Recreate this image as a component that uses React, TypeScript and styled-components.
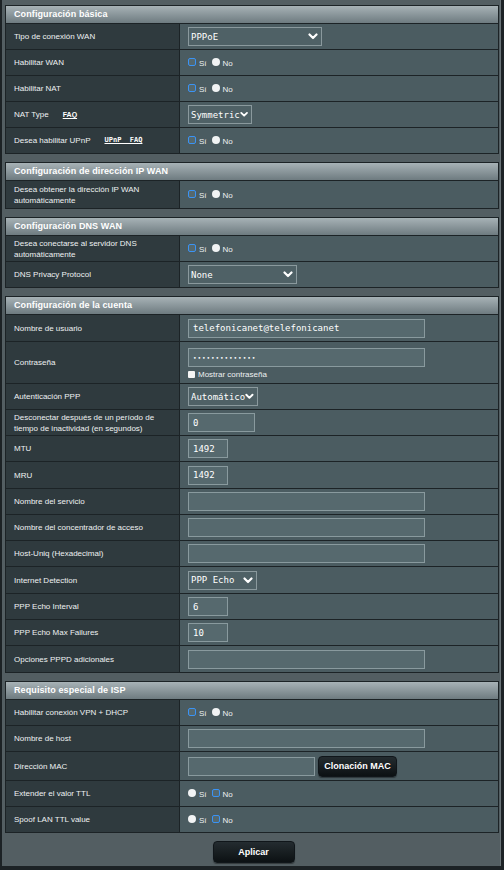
import styled, { createGlobalStyle } from 'styled-components';

const GlobalStyle = createGlobalStyle`
  html, body {
    margin: 0;
    padding: 0;
    background: #1c2225;
  }
  body {
    font-family: 'Liberation Sans', Arial, sans-serif;
    color: #ffffff;
  }
`;

type Field =
  | { kind: 'select'; value: string; width: number }
  | { kind: 'radio'; yes: boolean }
  | { kind: 'input'; value?: string; width: number }
  | { kind: 'password' }
  | { kind: 'mac' };

type RowData = {
  label: string;
  link?: { text: string; mono?: boolean };
  field: Field;
  height?: number;
};

type SectionData = { title: string; rows: RowData[] };

const sections: SectionData[] = [
  {
    title: 'Configuración básica',
    rows: [
      { label: 'Tipo de conexión WAN', field: { kind: 'select', value: 'PPPoE', width: 134 } },
      { label: 'Habilitar WAN', field: { kind: 'radio', yes: true } },
      { label: 'Habilitar NAT', field: { kind: 'radio', yes: true } },
      { label: 'NAT Type', link: { text: 'FAQ' }, field: { kind: 'select', value: 'Symmetric', width: 64 } },
      { label: 'Desea habilitar UPnP', link: { text: 'UPnP  FAQ', mono: true }, field: { kind: 'radio', yes: true } },
    ],
  },
  {
    title: 'Configuración de dirección IP WAN',
    rows: [
      { label: 'Desea obtener la dirección IP WAN automáticamente', field: { kind: 'radio', yes: true }, height: 28 },
    ],
  },
  {
    title: 'Configuración DNS WAN',
    rows: [
      { label: 'Desea conectarse al servidor DNS automáticamente', field: { kind: 'radio', yes: true } },
      { label: 'DNS Privacy Protocol', field: { kind: 'select', value: 'None', width: 109 } },
    ],
  },
  {
    title: 'Configuración de la cuenta',
    rows: [
      { label: 'Nombre de usuario', field: { kind: 'input', value: 'telefonicanet@telefonicanet', width: 237 }, height: 27 },
      { label: 'Contraseña', field: { kind: 'password' }, height: 42 },
      { label: 'Autenticación PPP', field: { kind: 'select', value: 'Automático', width: 70 } },
      { label: 'Desconectar después de un período de tiempo de inactividad (en segundos)', field: { kind: 'input', value: '0', width: 67 } },
      { label: 'MTU', field: { kind: 'input', value: '1492', width: 40 } },
      { label: 'MRU', field: { kind: 'input', value: '1492', width: 40 }, height: 27 },
      { label: 'Nombre del servicio', field: { kind: 'input', width: 237 } },
      { label: 'Nombre del concentrador de acceso', field: { kind: 'input', width: 237 } },
      { label: 'Host-Uniq (Hexadecimal)', field: { kind: 'input', width: 237 } },
      { label: 'Internet Detection', field: { kind: 'select', value: 'PPP Echo', width: 69 }, height: 27 },
      { label: 'PPP Echo Interval', field: { kind: 'input', value: '6', width: 40 } },
      { label: 'PPP Echo Max Failures', field: { kind: 'input', value: '10', width: 40 } },
      { label: 'Opciones PPPD adicionales', field: { kind: 'input', width: 237 }, height: 27 },
    ],
  },
  {
    title: 'Requisito especial de ISP',
    rows: [
      { label: 'Habilitar conexión VPN + DHCP', field: { kind: 'radio', yes: true } },
      { label: 'Nombre de host', field: { kind: 'input', width: 237 } },
      { label: 'Dirección MAC', field: { kind: 'mac' }, height: 29 },
      { label: 'Extender el valor TTL', field: { kind: 'radio', yes: false } },
      { label: 'Spoof LAN TTL value', field: { kind: 'radio', yes: false } },
    ],
  },
];

function Chevron() {
  return (
    <svg width='10' height='7' viewBox='0 0 10 7'>
      <polyline points='1.5,1.5 5,5 8.5,1.5' fill='none' stroke='#ffffff' strokeWidth='2.2' strokeLinecap='round' strokeLinejoin='round' />
    </svg>
  );
}

function RadioPair({ yes }: { yes: boolean }) {
  return (
    <RadioGroup>
      <RadioMark $checked={yes} />
      <RadioText>Sí</RadioText>
      <RadioMark $checked={!yes} />
      <RadioText>No</RadioText>
    </RadioGroup>
  );
}

function FieldCell({ field }: { field: Field }) {
  switch (field.kind) {
    case 'select':
      return (
        <Select style={{ width: field.width }}>
          <span>{field.value}</span>
          <Chevron />
        </Select>
      );
    case 'radio':
      return <RadioPair yes={field.yes} />;
    case 'input':
      return <TextBox style={{ width: field.width }}>{field.value}</TextBox>;
    case 'password':
      return (
        <PasswordStack>
          <TextBox style={{ width: 237 }}>
            <Dots>••••••••••••••</Dots>
          </TextBox>
          <CheckLine>
            <CheckBox />
            <span>Mostrar contraseña</span>
          </CheckLine>
        </PasswordStack>
      );
    case 'mac':
      return (
        <MacLine>
          <TextBox style={{ width: 127 }} />
          <DarkButton>Clonación MAC</DarkButton>
        </MacLine>
      );
  }
}

export default function App() {
  return (
    <>
      <GlobalStyle />
      <Page>
        {sections.map((section) => (
          <Table key={section.title}>
            <Header>{section.title}</Header>
            {section.rows.map((row) => (
              <Row key={row.label} $height={row.height ?? 26}>
                <Label>
                  <span>{row.label}</span>
                  {row.link && <FaqLink $mono={row.link.mono}>{row.link.text}</FaqLink>}
                </Label>
                <Value>
                  <FieldCell field={row.field} />
                </Value>
              </Row>
            ))}
          </Table>
        ))}
        <ApplyBar>
          <DarkButton $wide>Aplicar</DarkButton>
        </ApplyBar>
      </Page>
    </>
  );
}

const Page = styled.div`
  margin-left: 2px;
  width: 499px;
  height: 866px;
  box-sizing: border-box;
  padding: 5px 1px 0 3px;
  background: #535e62;
  border-right: 1px solid #6a7478;
  display: flex;
  flex-direction: column;
  gap: 8px;
`;

const Table = styled.div`
  border: 1px solid #1c2326;
  display: flex;
  flex-direction: column;
`;

const Header = styled.div`
  height: 17px;
  line-height: 17px;
  padding-left: 8px;
  font-size: 9px;
  font-weight: bold;
  color: #ffffff;
  background: linear-gradient(#a7b2b6, #6e7b80);
  border-bottom: 1px solid #1c2326;
  letter-spacing: 0.1px;
`;

const Row = styled.div<{ $height: number }>`
  display: grid;
  grid-template-columns: 174px 1fr;
  height: ${(p) => p.$height}px;
  box-sizing: border-box;
  border-bottom: 1px solid #1c2326;
  &:last-child {
    border-bottom: none;
    height: ${(p) => p.$height - 1}px;
  }
`;

const Label = styled.div`
  background: #2f3a3e;
  border-right: 1px solid #1c2326;
  padding: 0 18px 0 8px;
  display: flex;
  align-items: center;
  font-size: 8px;
  line-height: 11px;
  color: #eef1f2;
`;

const FaqLink = styled.a<{ $mono?: boolean }>`
  margin-left: 14px;
  font-family: ${(p) => (p.$mono ? "'DejaVu Sans Mono', monospace" : "'Liberation Sans', Arial, sans-serif")};
  font-size: 7px;
  font-weight: bold;
  color: #ffffff;
  text-decoration: underline;
  white-space: pre;
`;

const Value = styled.div`
  background: #4b5c61;
  padding-left: 8px;
  display: flex;
  align-items: center;
`;

const Select = styled.div`
  height: 19px;
  box-sizing: border-box;
  border: 1px solid #8a999d;
  background: #4f6166;
  display: flex;
  align-items: center;
  justify-content: space-between;
  padding: 0 3px 0 2px;
  font-family: 'DejaVu Sans Mono', monospace;
  font-size: 9px;
  color: #ffffff;
  white-space: pre;
`;

const TextBox = styled.div`
  height: 19px;
  box-sizing: border-box;
  border: 1px solid #899a9e;
  background: #56696e;
  padding: 0 4px;
  display: flex;
  align-items: center;
  font-family: 'DejaVu Sans Mono', monospace;
  font-size: 9px;
  color: #ffffff;
`;

const Dots = styled.span`
  font-size: 6px;
  letter-spacing: 0.9px;
`;

const PasswordStack = styled.div`
  display: flex;
  flex-direction: column;
  gap: 3px;
  padding-top: 1px;
`;

const CheckLine = styled.div`
  display: flex;
  align-items: center;
  gap: 3px;
  font-size: 8px;
  color: #eef1f2;
`;

const CheckBox = styled.span`
  width: 7px;
  height: 7px;
  background: #f4f4f4;
  border-radius: 1px;
`;

const RadioGroup = styled.div`
  display: flex;
  align-items: center;
  font-size: 8px;
  color: #eef1f2;
  padding-top: 1px;
`;

const RadioMark = styled.span<{ $checked: boolean }>`
  box-sizing: border-box;
  width: 8px;
  height: 8px;
  border-radius: ${(p) => (p.$checked ? '2px' : '50%')};
  border: ${(p) => (p.$checked ? '1.6px solid #3a93f5' : '0')};
  background: ${(p) => (p.$checked ? '#55686e' : '#f1f3f4')};
  margin-right: 3px;
  margin-top: -2px;
`;

const RadioText = styled.span`
  margin-right: 5px;
`;

const MacLine = styled.div`
  display: flex;
  align-items: center;
  gap: 3px;
`;

const DarkButton = styled.button<{ $wide?: boolean }>`
  width: ${(p) => (p.$wide ? 82 : 79)}px;
  height: ${(p) => (p.$wide ? 22 : 21)}px;
  border: 1px solid #10161a;
  border-radius: 4px;
  background: linear-gradient(#242c30, #0c1113);
  color: #ffffff;
  font-family: 'Liberation Sans', Arial, sans-serif;
  font-size: 9px;
  font-weight: bold;
  padding: 0;
  box-shadow: 0 1px 1px rgba(0, 0, 0, 0.4);
`;

const ApplyBar = styled.div`
  display: flex;
  justify-content: center;
  padding-left: 3px;
`;
